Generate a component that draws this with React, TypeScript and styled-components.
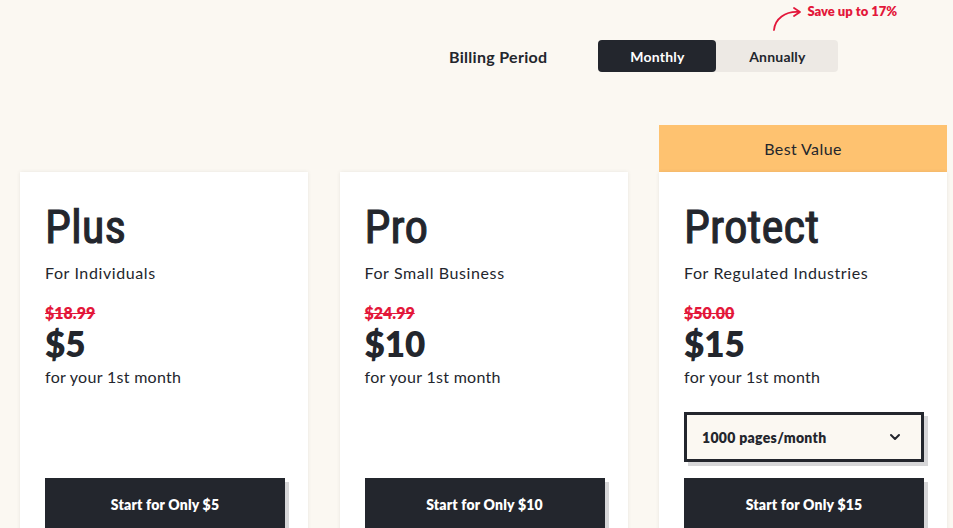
import React from 'react';
import styled, { createGlobalStyle } from 'styled-components';

const GlobalStyle = createGlobalStyle`
    html, body {
        margin : 0;
        padding : 0;
        background : #fbf8f2;
        overflow : hidden;
    }
    body {
        font-family : Lato, "Open Sans", sans-serif;
        color : #23262d;
    }
`

const Page = styled.div`
    width : 953px;
    height : 528px;
    overflow : hidden;
    display : flex;
    flex-direction : column;
`

const BillingRow = styled.div`
    display : flex;
    align-items : center;
    gap : 51px;
    padding : 40px 0px 0px 449px;
`

const BillingLabel = styled.span`
    font-size : 16px;
    font-weight : 700;
    letter-spacing : 0.3px;
`

const Toggle = styled.div`
    position : relative;
    display : flex;
    height : 32px;
    background : #ede9e4;
    border-radius : 4px;
`

const ToggleOption = styled.button<{ $active?: boolean }>`
    border : none;
    border-radius : 4px;
    width : ${(p) => (p.$active ? '118px' : '122px')};
    height : 32px;
    font-family : inherit;
    font-size : 14px;
    font-weight : 700;
    letter-spacing : 0.2px;
    background : ${(p) => (p.$active ? '#23262d' : 'transparent')};
    color : ${(p) => (p.$active ? '#ffffff' : '#23262d')};
    cursor : pointer;
`

const SaveNote = styled.div`
    position : absolute;
    left : 174px;
    top : -38px;
    display : flex;
    align-items : flex-start;
    gap : 3px;
    color : #e3173a;
    font-size : 13px;
    font-weight : 800;
    white-space : nowrap;
`

const NoteText = styled.span`
    margin-top : 1px;
`

const CardRow = styled.div`
    display : flex;
    gap : 31.5px;
    padding : 53px 0px 0px 20px;
`

const Column = styled.div<{ $featured?: boolean }>`
    width : 288px;
    display : flex;
    flex-direction : column;
    padding-top : ${(p) => (p.$featured ? '0px' : '47px')};
`

const Banner = styled.div`
    height : 47px;
    background : #fec270;
    display : flex;
    align-items : center;
    justify-content : center;
    font-size : 16px;
    letter-spacing : 0.4px;
`

const Card = styled.div`
    background : #ffffff;
    box-shadow : 0px 0px 4px rgba(0, 0, 0, 0.08);
    padding : 31px 25px 0px 25px;
    height : 400px;
    display : flex;
    flex-direction : column;
`

const PlanName = styled.h2`
    margin : 0;
    font-family : "Liberation Sans Narrow", "Roboto Condensed", "DejaVu Sans", sans-serif;
    font-stretch : condensed;
    font-weight : 400;
    -webkit-text-stroke : 1px #23262d;
    font-size : 47px;
    line-height : 48px;
`

const PlanFor = styled.div`
    margin-top : 12px;
    font-size : 16px;
    line-height : 20px;
    letter-spacing : 0.6px;
`

const OldPrice = styled.s`
    margin-top : 21px;
    color : #e3173a;
    font-size : 16px;
    font-weight : 800;
    line-height : 18px;
`

const Price = styled.div`
    margin-top : 3px;
    font-size : 35px;
    font-weight : 800;
    line-height : 36px;
`

const PriceNote = styled.div`
    margin-top : 6px;
    font-size : 16px;
    line-height : 20px;
    letter-spacing : 0.3px;
`

const Extras = styled.div`
    height : 50px;
    margin : 25px 0px 16px 0px;
`

const Select = styled.div`
    box-sizing : border-box;
    width : 240px;
    height : 50px;
    border : 3px solid #23262d;
    background : #fbf8f2;
    box-shadow : 4px 4px 0px #d6d6d8;
    display : flex;
    align-items : center;
    justify-content : space-between;
    padding : 0px 20px 0px 15px;
    font-size : 14px;
    font-weight : 800;
    letter-spacing : 0.3px;
`

const StartButton = styled.button`
    width : 240px;
    height : 52px;
    border : none;
    background : #23262d;
    color : #ffffff;
    box-shadow : 4px 4px 0px #d6d6d8;
    font-family : inherit;
    font-size : 14px;
    font-weight : 800;
    letter-spacing : 0.2px;
    cursor : pointer;
`

const plans = [
    { name: 'Plus', audience: 'For Individuals', oldPrice: '$18.99', price: '$5' },
    { name: 'Pro', audience: 'For Small Business', oldPrice: '$24.99', price: '$10' },
    { name: 'Protect', audience: 'For Regulated Industries', oldPrice: '$50.00', price: '$15', featured: true },
]

const App = () => {
    return (
        <Page>
            <GlobalStyle />
            <BillingRow>
                <BillingLabel>Billing Period</BillingLabel>
                <Toggle>
                    <ToggleOption $active>Monthly</ToggleOption>
                    <ToggleOption>Annually</ToggleOption>
                    <SaveNote>
                        <svg width="32" height="30" viewBox="0 0 32 30" fill="none" stroke="#e3173a" strokeWidth="1.8" strokeLinecap="round" strokeLinejoin="round">
                            <path d="M2 28 C3 17 13 9 27 10" />
                            <path d="M22 6 L28 10 L22 14" />
                        </svg>
                        <NoteText>Save up to 17%</NoteText>
                    </SaveNote>
                </Toggle>
            </BillingRow>
            <CardRow>
                {plans.map((plan) => (
                    <Column key={plan.name} $featured={plan.featured}>
                        {plan.featured && <Banner>Best Value</Banner>}
                        <Card>
                            <PlanName>{plan.name}</PlanName>
                            <PlanFor>{plan.audience}</PlanFor>
                            <OldPrice>{plan.oldPrice}</OldPrice>
                            <Price>{plan.price}</Price>
                            <PriceNote>for your 1st month</PriceNote>
                            <Extras>
                                {plan.featured && (
                                    <Select>
                                        <span>1000 pages/month</span>
                                        <svg width="12" height="8" viewBox="0 0 12 8" fill="none" stroke="#23262d" strokeWidth="2" strokeLinecap="round" strokeLinejoin="round">
                                            <path d="M2 2 L6 6 L10 2" />
                                        </svg>
                                    </Select>
                                )}
                            </Extras>
                            <StartButton>Start for Only {plan.price}</StartButton>
                        </Card>
                    </Column>
                ))}
            </CardRow>
        </Page>
    )
}

export default App;
